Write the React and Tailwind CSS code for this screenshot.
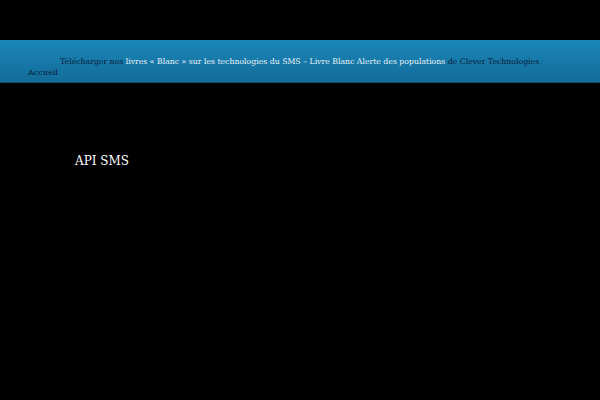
export default function App() {
  return (
    <div className="w-[600px] h-[400px] bg-black overflow-hidden" style={{ fontFamily: '"DejaVu Serif", serif' }}>
      <div className="h-[40px]"></div>
      <div className="h-[43px] bg-gradient-to-b from-[#1a86b8] to-[#136c9a] border-b border-[#0d4d70] pl-[28px] pt-[16px] text-[8px] leading-[11px]">
        <div className="pl-[32px] whitespace-nowrap text-[7.75px]">
          <span className="text-[#08203a]">Télécharger nos </span>
          <span className="text-[#e8f2f8]">livres « Blanc » sur les technologies du SMS – Livre Blanc Alerte des populations</span>
          <span className="text-[#08203a]"> de Clever Technologies</span>
        </div>
        <div className="text-[#08203a]">Accueil</div>
      </div>
      <div className="pl-[75px] pt-[71px] text-[12px] leading-[14px] text-white">API SMS</div>
    </div>
  );
}
